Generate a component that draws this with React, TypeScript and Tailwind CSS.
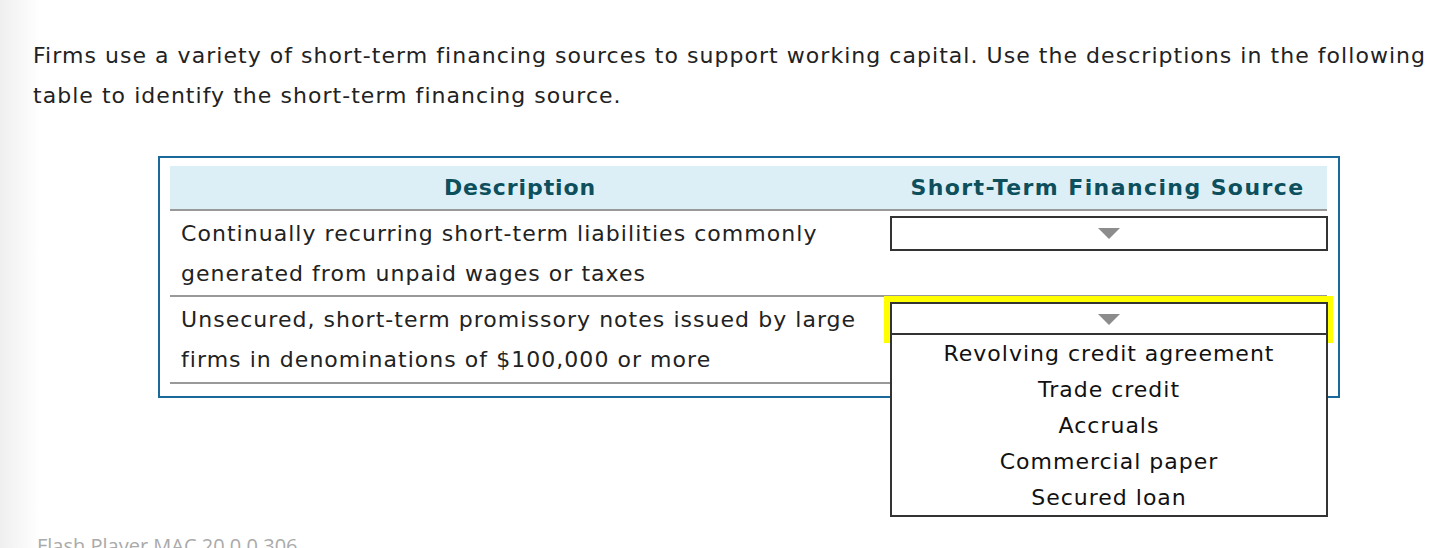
import React from "react";

function Arrow() {
  return (
    <svg width="22" height="11" viewBox="0 0 22 11" className="block">
      <polygon points="0,0 22,0 11,11" fill="#8c8c8c" />
    </svg>
  );
}

const options = [
  "Revolving credit agreement",
  "Trade credit",
  "Accruals",
  "Commercial paper",
  "Secured loan",
];

export default function App() {
  return (
    <div className="h-[548px] w-full overflow-hidden bg-[linear-gradient(90deg,#efefef_0px,#ffffff_40px)] font-['DejaVu_Sans','Liberation_Sans',sans-serif] text-[#222]">
      <div className="pl-[33px] pt-[36px]">
        <p className="text-[22px] leading-[40px] tracking-[1.04px]">
          Firms use a variety of short-term financing sources to support working capital. Use the descriptions in the following
          <br />
          table to identify the short-term financing source.
        </p>

        <div className="ml-[125px] mt-[40px] w-[1182px] border-2 border-[#19699b] pl-[10px] pr-[11px] pt-[8px] pb-[12px]">
          <div className="grid grid-cols-[714px_443px]">
            {/* header */}
            <div className="flex h-[43px] items-center justify-center bg-[#dceff7] pr-[14px] text-[22px] font-bold tracking-[0.9px] text-[#0d4f5c]">
              Description
            </div>
            <div className="flex h-[43px] items-center justify-center bg-[#dceff7] pl-[4px] text-[22px] font-bold tracking-[1.4px] text-[#0d4f5c]">
              Short-Term Financing Source
            </div>
            <div className="col-span-2 h-[2px] bg-[#999999]" />

            {/* row 1 */}
            <div className="h-[84px] pl-[11px] pt-[3px] text-[22px] leading-[40px] tracking-[1.04px]">
              Continually recurring short-term liabilities commonly
              <br />
              generated from unpaid wages or taxes
            </div>
            <div className="h-[84px] pl-[6px] pt-[5px]">
              <div className="flex h-[35px] w-[438px] items-center justify-center border-2 border-[#333333] bg-white">
                <Arrow />
              </div>
            </div>
            <div className="col-span-2 h-[2px] bg-[#999999]" />

            {/* row 2 */}
            <div className="h-[85px] pl-[11px] pt-[3px] text-[22px] leading-[40px] tracking-[1.04px]">
              Unsecured, short-term promissory notes issued by large
              <br />
              firms in denominations of $100,000 or more
            </div>
            <div className="relative h-[85px]">
              <div className="relative -mt-[1px] w-[449px] border-[6px] border-[#ffff00]">
                <div className="relative flex h-[35px] w-[438px] items-center justify-center border-2 border-[#333333] bg-white">
                  <Arrow />
                  <ul className="absolute left-[-2px] top-full z-10 -mt-[2px] w-[438px] border-2 border-[#333333] bg-white">
                    {options.map((o) => (
                      <li key={o} className="flex h-[36px] items-center justify-center text-[22px] tracking-[1px] text-[#111]">
                        {o}
                      </li>
                    ))}
                  </ul>
                </div>
              </div>
            </div>
            <div className="col-span-2 h-[2px] bg-[#999999]" />
          </div>
        </div>

        <div className="ml-[4px] mt-[135px] font-['Open_Sans',sans-serif] text-[20px] leading-[26px] text-[#aaaaaa]">
          Flash Player MAC 20.0.0.306
        </div>
      </div>
    </div>
  );
}
